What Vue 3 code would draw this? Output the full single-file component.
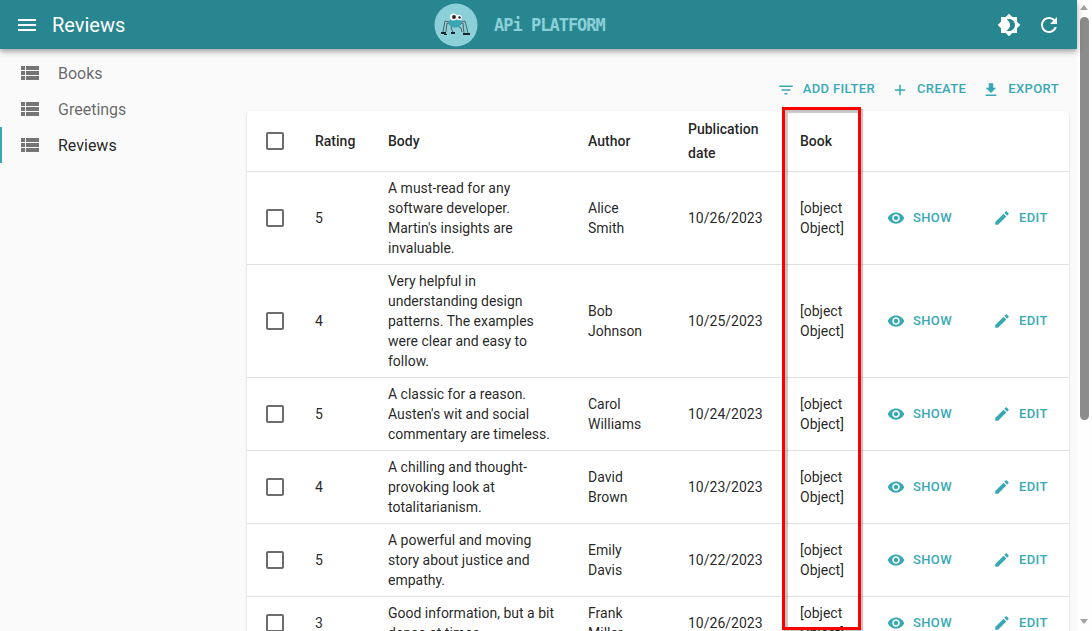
<script setup>
const icons = {
  menu: 'M3 18h18v-2H3v2zm0-5h18v-2H3v2zm0-7v2h18V6H3z',
  list: 'M3 14h4v-4H3v4zm0 5h4v-4H3v4zM3 9h4V5H3v4zm5 5h13v-4H8v4zm0 5h13v-4H8v4zM8 5v4h13V5H8z',
  theme: 'M20 8.69V4h-4.69L12 .69 8.69 4H4v4.69L.69 12 4 15.31V20h4.69L12 23.31 15.31 20H20v-4.69L23.31 12 20 8.69zM12 18c-.89 0-1.74-.2-2.5-.55C11.56 16.5 13 14.42 13 12s-1.44-4.5-3.5-5.45C10.26 6.2 11.11 6 12 6c3.31 0 6 2.69 6 6s-2.69 6-6 6z',
  refresh: 'M17.65 6.35C16.2 4.9 14.21 4 12 4c-4.42 0-7.99 3.58-7.99 8s3.57 8 7.99 8c3.73 0 6.84-2.55 7.73-6h-2.08c-.82 2.33-3.04 4-5.65 4-3.31 0-6-2.69-6-6s2.69-6 6-6c1.66 0 3.14.69 4.22 1.78L13 11h7V4l-2.35 2.35z',
  filter: 'M10 18h4v-2h-4v2zM3 6v2h18V6H3zm3 7h12v-2H6v2z',
  plus: 'M19 13h-6v6h-2v-6H5v-2h6V5h2v6h6v2z',
  exportIcon: 'M19 9h-4V3H9v6H5l7 7 7-7zM5 18v2h14v-2H5z',
  check: 'M19 5v14H5V5h14m0-2H5c-1.1 0-2 .9-2 2v14c0 1.1.9 2 2 2h14c1.1 0 2-.9 2-2V5c0-1.1-.9-2-2-2z',
  eye: 'M12 4.5C7 4.5 2.73 7.61 1 12c1.73 4.39 6 7.5 11 7.5s9.27-3.11 11-7.5c-1.73-4.39-6-7.5-11-7.5zM12 17c-2.76 0-5-2.24-5-5s2.24-5 5-5 5 2.24 5 5-2.24 5-5 5zm0-8c-1.66 0-3 1.34-3 3s1.34 3 3 3 3-1.34 3-3-1.34-3-3-3z',
  edit: 'M3 17.25V21h3.75L17.81 9.94l-3.75-3.75L3 17.25zM20.71 7.04c.39-.39.39-1.02 0-1.41l-2.34-2.34c-.39-.39-1.02-.39-1.41 0l-1.83 1.83 3.75 3.75 1.83-1.83z',
}
const nav = [
  { label: 'Books', active: false },
  { label: 'Greetings', active: false },
  { label: 'Reviews', active: true },
]
const tools = [
  { label: 'Add filter', icon: icons.filter },
  { label: 'Create', icon: icons.plus },
  { label: 'Export', icon: icons.exportIcon },
]
const rows = [
  { rating: 5, body: "A must-read for any software developer. Martin's insights are invaluable.", author: 'Alice Smith', date: '10/26/2023' },
  { rating: 4, body: 'Very helpful in understanding design patterns. The examples were clear and easy to follow.', author: 'Bob Johnson', date: '10/25/2023' },
  { rating: 5, body: "A classic for a reason. Austen's wit and social commentary are timeless.", author: 'Carol Williams', date: '10/24/2023' },
  { rating: 4, body: 'A chilling and thought-provoking look at totalitarianism.', author: 'David Brown', date: '10/23/2023' },
  { rating: 5, body: 'A powerful and moving story about justice and empathy.', author: 'Emily Davis', date: '10/22/2023' },
  { rating: 3, body: 'Good information, but a bit dense at times.', author: 'Frank Miller', date: '10/26/2023' },
]
</script>

<template>
  <div class="root">
    <div class="page">
      <header class="appbar">
        <svg class="burger" viewBox="0 0 24 24"><path :d="icons.menu" /></svg>
        <div class="title">Reviews</div>
        <div class="logo">
          <svg class="spider" viewBox="0 0 44 44" width="44" height="44">
            <circle cx="22" cy="22" r="21.5" fill="#8bd0d8" />
            <g fill="none" stroke="#4d6468" stroke-width="1">
              <path d="M16 19 L11 18 L9 29" />
              <path d="M17 21 L13 20 L12 29" />
              <path d="M18 23 L17 25 L19 29" />
              <path d="M27 19 L31 18 L34 30" />
              <path d="M26 21 L29 20 L30 30" />
              <path d="M24 23 L27 25 L28 29" />
            </g>
            <ellipse cx="21" cy="20" rx="6.5" ry="4.5" fill="#38a6b2" />
            <circle cx="19.5" cy="14" r="3.6" fill="#fff" />
            <circle cx="25" cy="14.5" r="2.8" fill="#fff" />
            <circle cx="20" cy="14" r="1.9" fill="#222" />
            <circle cx="25.5" cy="14.5" r="1.2" fill="#222" />
            <g fill="#14282c">
              <rect x="7" y="29" width="5" height="2" />
              <rect x="10" y="31" width="3" height="1" />
              <rect x="17" y="29" width="4" height="2" />
              <rect x="29" y="30" width="4" height="2" />
              <rect x="33" y="30" width="3" height="2" />
            </g>
          </svg>
          <span class="logotext">APi PLATFORM</span>
        </div>
        <div class="spacer"></div>
        <button class="iconbtn"><svg viewBox="0 0 24 24"><path :d="icons.theme" /></svg></button>
        <button class="iconbtn"><svg viewBox="0 0 24 24"><path :d="icons.refresh" /></svg></button>
      </header>

      <div class="body">
        <nav class="sidebar">
          <a v-for="item in nav" :key="item.label" class="navitem" :class="{ active: item.active }">
            <svg viewBox="0 0 24 24"><path :d="icons.list" /></svg>
            <span>{{ item.label }}</span>
          </a>
        </nav>

        <main class="main">
          <div class="toolbar">
            <button v-for="t in tools" :key="t.label" class="btn">
              <svg viewBox="0 0 24 24"><path :d="t.icon" /></svg>{{ t.label }}
            </button>
          </div>
          <div class="card">
            <table>
              <colgroup>
                <col class="c-check" /><col class="c-rating" /><col class="c-body" /><col class="c-author" />
                <col class="c-date" /><col class="c-book" /><col class="c-show" /><col class="c-edit" />
              </colgroup>
              <thead>
                <tr>
                  <th class="checkcell"><svg class="check" viewBox="0 0 24 24"><path :d="icons.check" /></svg></th>
                  <th>Rating</th>
                  <th>Body</th>
                  <th>Author</th>
                  <th>Publication date</th>
                  <th>Book</th>
                  <th></th>
                  <th></th>
                </tr>
              </thead>
              <tbody>
                <tr v-for="(r, i) in rows" :key="i">
                  <td class="checkcell"><svg class="check" viewBox="0 0 24 24"><path :d="icons.check" /></svg></td>
                  <td>{{ r.rating }}</td>
                  <td>{{ r.body }}</td>
                  <td>{{ r.author }}</td>
                  <td>{{ r.date }}</td>
                  <td>[object Object]</td>
                  <td class="actioncell"><button class="btn"><svg viewBox="0 0 24 24"><path :d="icons.eye" /></svg>Show</button></td>
                  <td class="actioncell"><button class="btn"><svg viewBox="0 0 24 24"><path :d="icons.edit" /></svg>Edit</button></td>
                </tr>
              </tbody>
            </table>
          </div>
        </main>
      </div>
    </div>

    <aside class="scrollbar">
      <span class="arrow up"></span>
      <span class="thumb"></span>
      <span class="arrow down"></span>
    </aside>

    <div class="highlight"></div>
  </div>
</template>

<style scoped>
.root {
  position: relative;
  display: flex;
  width: 1092px;
  height: 631px;
  overflow: hidden;
  background: #fafafa;
  font-family: Roboto, "Liberation Sans", sans-serif;
  color: rgba(0, 0, 0, 0.87);
}
.page {
  flex: 1;
  min-width: 0;
  display: flex;
  flex-direction: column;
}
.appbar {
  position: relative;
  z-index: 2;
  flex: none;
  height: 49px;
  display: flex;
  align-items: center;
  padding: 0 8px 0 15px;
  background: #288690;
  color: #fff;
  box-shadow: 0 2px 4px -1px rgba(0, 0, 0, 0.2), 0 4px 5px 0 rgba(0, 0, 0, 0.14), 0 1px 10px 0 rgba(0, 0, 0, 0.12);
}
.burger {
  width: 24px;
  height: 24px;
  margin-right: 13px;
  fill: #fff;
}
.title {
  flex: 1 1 0;
  font-size: 20px;
  line-height: 1.6;
  white-space: nowrap;
}
.logo {
  display: flex;
  align-items: center;
  gap: 16px;
  width: 170px;
  height: 44px;
  margin-top: 1px;
}
.spider {
  flex: none;
}
.logotext {
  font-family: "DejaVu Sans Mono", monospace;
  font-weight: 700;
  font-size: 17px;
  letter-spacing: -1px;
  color: #8bd0d8;
  white-space: nowrap;
  margin-left: 0;
}
.spacer {
  flex: 1 1 0;
  margin-left: 3px;
}
.iconbtn {
  width: 40px;
  height: 40px;
  padding: 8px;
  border: 0;
  background: none;
}
.iconbtn svg {
  display: block;
  width: 24px;
  height: 24px;
  fill: #fff;
}
.body {
  flex: 1;
  min-height: 0;
  display: flex;
}
.sidebar {
  flex: none;
  width: 247px;
  padding-top: 6px;
  box-sizing: border-box;
}
.navitem {
  display: flex;
  align-items: center;
  height: 36px;
  padding-left: 18px;
  font-size: 16px;
  color: rgba(0, 0, 0, 0.6);
  box-sizing: border-box;
}
.navitem svg {
  width: 24px;
  height: 24px;
  margin-right: 16px;
  fill: #757575;
}
.navitem.active {
  color: rgba(0, 0, 0, 0.87);
  border-left: 2px solid #38a9b4;
  padding-left: 16px;
}
.main {
  flex: 1;
  min-width: 0;
  padding-right: 8px;
}
.toolbar {
  display: flex;
  justify-content: flex-end;
  align-items: flex-end;
  gap: 8px;
  height: 62px;
  padding: 0 5px 6px 0;
  box-sizing: border-box;
}
.btn {
  display: inline-flex;
  align-items: center;
  padding: 4px 5px;
  border: 0;
  background: none;
  font-family: inherit;
  font-size: 13px;
  font-weight: 500;
  line-height: 1.75;
  letter-spacing: 0.37px;
  text-transform: uppercase;
  color: #38a9b4;
  white-space: nowrap;
}
.btn svg {
  width: 18px;
  height: 18px;
  margin: 0 8px 0 -2px;
  fill: currentColor;
}
.card {
  background: #fff;
  border-radius: 4px;
  box-shadow: 0 2px 1px -1px rgba(0, 0, 0, 0.2), 0 1px 1px 0 rgba(0, 0, 0, 0.14), 0 1px 3px 0 rgba(0, 0, 0, 0.12);
}
table {
  width: 822px;
  table-layout: fixed;
  border-collapse: collapse;
  font-size: 14px;
  line-height: 20px;
}
.c-check { width: 52px; }
.c-rating { width: 73px; }
.c-body { width: 200px; }
.c-author { width: 100px; }
.c-date { width: 112px; }
.c-book { width: 84px; }
.c-show { width: 106px; }
.c-edit { width: 95px; }
th, td {
  padding: 6px 16px;
  text-align: left;
  vertical-align: middle;
  border-bottom: 1px solid #e0e0e0;
}
th {
  font-weight: 500;
  line-height: 24px;
}
.checkcell {
  padding: 0 16px;
}
.check {
  display: block;
  width: 24px;
  height: 24px;
  fill: #6d6d6d;
}
.actioncell {
  padding-top: 0;
  padding-bottom: 0;
}
.scrollbar {
  position: relative;
  flex: none;
  width: 15px;
  background: #fefefe;
}
.thumb {
  position: absolute;
  left: 3px;
  top: 17px;
  width: 9px;
  height: 403px;
  border-radius: 4.5px;
  background: #8c8c8c;
}
.arrow {
  position: absolute;
  left: 3px;
  width: 0;
  height: 0;
  border-left: 4.5px solid transparent;
  border-right: 4.5px solid transparent;
}
.arrow.up {
  top: 5px;
  border-bottom: 5px solid #a3a3a3;
}
.arrow.down {
  top: 619px;
  border-top: 5px solid #a3a3a3;
}
.highlight {
  position: absolute;
  left: 782px;
  top: 107px;
  width: 79px;
  height: 523px;
  box-sizing: border-box;
  border: 3px solid #f00;
  box-shadow: 2px 2px 1px rgba(0, 0, 0, 0.22), inset 3px 3px 1px rgba(0, 0, 0, 0.22);
  pointer-events: none;
}
</style>
